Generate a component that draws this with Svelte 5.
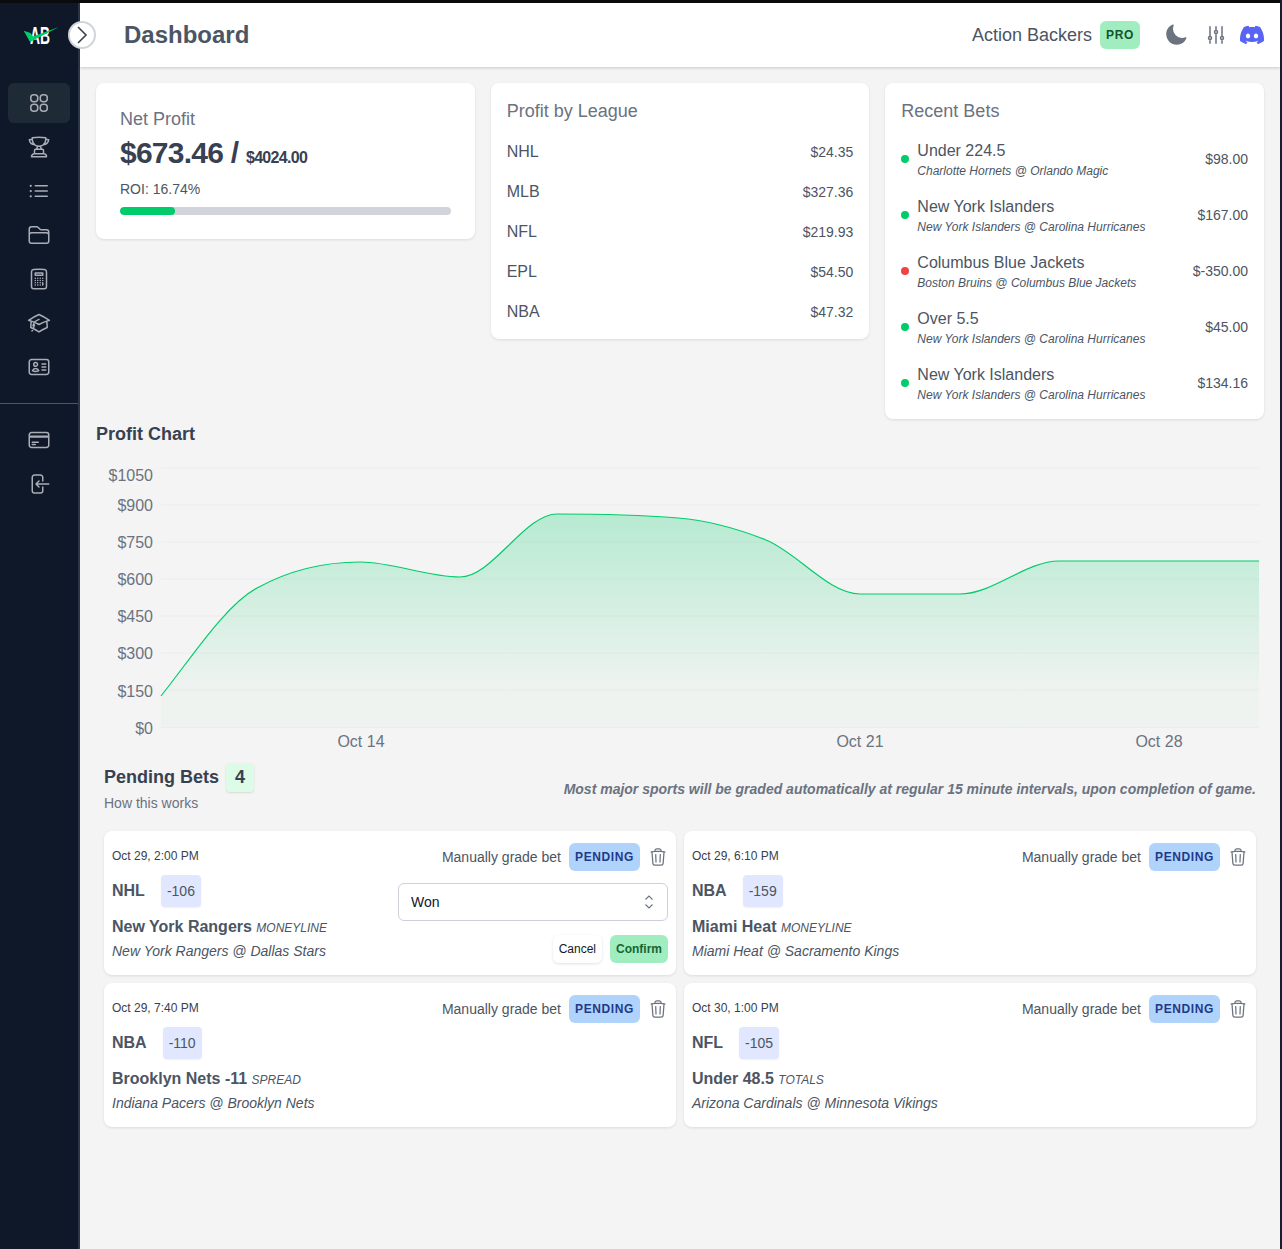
<script>
  const nav = [
    { d: 'M16.5 18.75h-9m9 0a3 3 0 0 1 3 3h-15a3 3 0 0 1 3-3m9 0v-3.375c0-.621-.503-1.125-1.125-1.125h-.871M7.5 18.75v-3.375c0-.621.504-1.125 1.125-1.125h.872m5.007 0H9.497m5.007 0a7.454 7.454 0 0 1-.982-3.172M9.497 14.25a7.454 7.454 0 0 0 .981-3.172M5.25 4.236c-.982.143-1.954.317-2.916.52A6.003 6.003 0 0 0 7.73 9.728M5.25 4.236V4.5c0 2.108.966 3.99 2.48 5.228M5.25 4.236V2.721C7.456 2.41 9.71 2.25 12 2.25c2.291 0 4.545.16 6.75.47v1.516M7.73 9.728a6.726 6.726 0 0 0 2.748 1.35m8.272-6.842V4.5c0 2.108-.966 3.99-2.48 5.228m2.48-5.492a46.32 46.32 0 0 1 2.916.52 6.003 6.003 0 0 1-5.395 4.972m0 0a6.726 6.726 0 0 1-2.749 1.35m0 0a6.772 6.772 0 0 1-3.044 0' },
    { d: 'M8.25 6.75h12M8.25 12h12m-12 5.25h12M3.75 6.75h.007v.008H3.75V6.75Zm.375 0a.375.375 0 1 1-.75 0 .375.375 0 0 1 .75 0ZM3.75 12h.007v.008H3.75V12Zm.375 0a.375.375 0 1 1-.75 0 .375.375 0 0 1 .75 0Zm-.375 5.25h.007v.008H3.75v-.008Zm.375 0a.375.375 0 1 1-.75 0 .375.375 0 0 1 .75 0Z' },
    { d: 'M2.25 12.75V12A2.25 2.25 0 0 1 4.5 9.75h15A2.25 2.25 0 0 1 21.75 12v.75m-8.69-6.44-2.12-2.12a1.5 1.5 0 0 0-1.061-.44H4.5A2.25 2.25 0 0 0 2.25 6v12a2.25 2.25 0 0 0 2.25 2.25h15A2.25 2.25 0 0 0 21.75 18V9a2.25 2.25 0 0 0-2.25-2.25h-5.379a1.5 1.5 0 0 1-1.06-.44Z' },
    { d: 'M15.75 15.75V18m-7.5-6.75h.008v.008H8.25v-.008Zm0 2.25h.008v.008H8.25V13.5Zm0 2.25h.008v.008H8.25v-.008Zm0 2.25h.008v.008H8.25V18Zm2.498-6.75h.007v.008h-.007v-.008Zm0 2.25h.007v.008h-.007V13.5Zm0 2.25h.007v.008h-.007v-.008Zm0 2.25h.007v.008h-.007V18Zm2.504-6.75h.008v.008h-.008v-.008Zm0 2.25h.008v.008h-.008V13.5Zm0 2.25h.008v.008h-.008v-.008Zm0 2.25h.008v.008h-.008V18Zm2.498-6.75h.008v.008h-.008v-.008Zm0 2.25h.008v.008h-.008V13.5ZM8.25 6h7.5v2.25h-7.5V6ZM12 2.25c-1.892 0-3.758.11-5.593.322C5.307 2.7 4.5 3.65 4.5 4.757V19.5a2.25 2.25 0 0 0 2.25 2.25h10.5a2.25 2.25 0 0 0 2.25-2.25V4.757c0-1.108-.806-2.057-1.907-2.185A48.507 48.507 0 0 0 12 2.25Z' },
    { d: 'M4.26 10.147a60.438 60.438 0 0 0-.491 6.347A48.62 48.62 0 0 1 12 20.904a48.62 48.62 0 0 1 8.232-4.41 60.46 60.46 0 0 0-.491-6.347m-15.482 0a50.636 50.636 0 0 0-2.658-.813A59.906 59.906 0 0 1 12 3.493a59.903 59.903 0 0 1 10.399 5.84c-.896.248-1.783.52-2.658.814m-15.482 0A50.717 50.717 0 0 1 12 13.489a50.702 50.702 0 0 1 7.74-3.342M6.75 15a.75.75 0 1 0 0-1.5.75.75 0 0 0 0 1.5Zm0 0v-3.675A55.378 55.378 0 0 1 12 8.443m-7.007 11.55A5.981 5.981 0 0 0 6.75 15.75v-1.5' },
    { d: 'M15 9h3.75M15 12h3.75M15 15h3.75M4.5 19.5h15a2.25 2.25 0 0 0 2.25-2.25V6.75A2.25 2.25 0 0 0 19.5 4.5h-15a2.25 2.25 0 0 0-2.25 2.25v10.5A2.25 2.25 0 0 0 4.5 19.5Zm6-10.125a1.875 1.875 0 1 1-3.75 0 1.875 1.875 0 0 1 3.75 0Zm1.294 6.336a6.721 6.721 0 0 1-3.17.789 6.721 6.721 0 0 1-3.168-.789 3.376 3.376 0 0 1 6.338 0Z' }
  ];
  const navBottom = [
    'M2.25 8.25h19.5M2.25 9h19.5m-16.5 5.25h6m-6 2.25h3m-3.75 3h15a2.25 2.25 0 0 0 2.25-2.25V6.75A2.25 2.25 0 0 0 19.5 4.5h-15a2.25 2.25 0 0 0-2.25 2.25v10.5A2.25 2.25 0 0 0 4.5 19.5Z',
    'M15.75 9V5.25A2.25 2.25 0 0 0 13.5 3h-6a2.25 2.25 0 0 0-2.25 2.25v13.5A2.25 2.25 0 0 0 7.5 21h6a2.25 2.25 0 0 0 2.25-2.25V15M12 9l-3 3 3 3M9 12h12.75'
  ];
  const trash = 'm14.74 9-.346 9m-4.788 0L9.26 9m9.968-3.21c.342.052.682.107 1.022.166m-1.022-.165L18.16 19.673a2.25 2.25 0 0 1-2.244 2.077H8.084a2.25 2.25 0 0 1-2.244-2.077L4.772 5.79m14.456 0a48.108 48.108 0 0 0-3.478-.397m-12 .562c.34-.059.68-.114 1.022-.165m0 0a48.11 48.11 0 0 1 3.478-.397m7.5 0v-.916c0-1.18-.91-2.164-2.09-2.201a51.964 51.964 0 0 0-3.32 0c-1.18.037-2.09 1.022-2.09 2.201v.916m7.5 0a48.667 48.667 0 0 0-7.5 0';

  const leagues = [
    ['NHL', '$24.35'], ['MLB', '$327.36'], ['NFL', '$219.93'], ['EPL', '$54.50'], ['NBA', '$47.32']
  ];
  const recent = [
    { pick: 'Under 224.5', game: 'Charlotte Hornets @ Orlando Magic', amount: '$98.00', won: true },
    { pick: 'New York Islanders', game: 'New York Islanders @ Carolina Hurricanes', amount: '$167.00', won: true },
    { pick: 'Columbus Blue Jackets', game: 'Boston Bruins @ Columbus Blue Jackets', amount: '$-350.00', won: false },
    { pick: 'Over 5.5', game: 'New York Islanders @ Carolina Hurricanes', amount: '$45.00', won: true },
    { pick: 'New York Islanders', game: 'New York Islanders @ Carolina Hurricanes', amount: '$134.16', won: true }
  ];
  const pending = [
    { date: 'Oct 29, 2:00 PM', league: 'NHL', odds: '-106', pick: 'New York Rangers', type: 'MONEYLINE', game: 'New York Rangers @ Dallas Stars', grading: true },
    { date: 'Oct 29, 6:10 PM', league: 'NBA', odds: '-159', pick: 'Miami Heat', type: 'MONEYLINE', game: 'Miami Heat @ Sacramento Kings' },
    { date: 'Oct 29, 7:40 PM', league: 'NBA', odds: '-110', pick: 'Brooklyn Nets -11', type: 'SPREAD', game: 'Indiana Pacers @ Brooklyn Nets' },
    { date: 'Oct 30, 1:00 PM', league: 'NFL', odds: '-105', pick: 'Under 48.5', type: 'TOTALS', game: 'Arizona Cardinals @ Minnesota Vikings' }
  ];

  // chart coordinates are relative to the svg; each point is x, y, slope
  const gridY = [13, 50, 87, 124, 161, 198, 235, 272.5];
  const yLabels = [
    ['$1050', 20], ['$900', 50], ['$750', 87], ['$600', 124], ['$450', 161], ['$300', 198], ['$150', 236], ['$0', 273]
  ];
  const points = [
    [81, 241, -1.26], [177, 133, -0.55], [280, 107, 0], [380, 122, 0], [477, 59, 0], [598, 63, 0.08],
    [686, 85, 0.4], [780, 139, 0], [880, 139, 0], [979, 106, 0], [1079, 106, 0], [1179, 106, 0]
  ];

  function smooth(pts) {
    let d = `M${pts[0][0]} ${pts[0][1]}`;
    for (let i = 1; i < pts.length; i++) {
      const a = pts[i - 1], b = pts[i];
      const h = (b[0] - a[0]) / 3;
      d += `C${a[0] + h} ${a[1] + a[2] * h} ${b[0] - h} ${b[1] - b[2] * h} ${b[0]} ${b[1]}`;
    }
    return d;
  }
  const line = smooth(points);
  const area = `${line}L1179 272.5L81 272.5Z`;
</script>

<div class="shell">
  <aside class="sidebar">
    <div class="logo">
      <svg width="54" height="30" viewBox="0 0 54 30">
        <text x="18" y="24" textLength="20" lengthAdjust="spacingAndGlyphs" class="logo-text">AB</text>
        <path d="M11.7 10.7 L18.5 13 L21 16.5 L47 7 L18 22 Z" fill="#00cc6a" />
      </svg>
    </div>
    <button class="toggle" aria-label="Toggle sidebar">
      <svg width="16" height="18" viewBox="0 0 16 18" fill="none" stroke="#374151" stroke-width="1.6">
        <path d="M4 1l8 8-8 8" />
      </svg>
    </button>
    <nav class="nav">
      <a class="nav-item active" href="#top" aria-label="Dashboard">
        <svg width="24" height="24" viewBox="0 0 24 24" fill="none" stroke="currentColor" stroke-width="1.5">
          <rect x="3.75" y="3.75" width="7" height="7" rx="3" />
          <rect x="13.25" y="3.75" width="7" height="7" rx="3" />
          <rect x="3.75" y="13.25" width="7" height="7" rx="3" />
          <rect x="13.25" y="13.25" width="7" height="7" rx="3" />
        </svg>
      </a>
      {#each nav as item}
        <a class="nav-item" href="#top" aria-label="Menu item">
          <svg width="24" height="24" viewBox="0 0 24 24" fill="none" stroke="currentColor" stroke-width="1.5" stroke-linecap="round" stroke-linejoin="round">
            <path d={item.d} />
          </svg>
        </a>
      {/each}
    </nav>
    <div class="divider"></div>
    <nav class="nav">
      {#each navBottom as d}
        <a class="nav-item" href="#top" aria-label="Menu item">
          <svg width="24" height="24" viewBox="0 0 24 24" fill="none" stroke="currentColor" stroke-width="1.5" stroke-linecap="round" stroke-linejoin="round">
            <path {d} />
          </svg>
        </a>
      {/each}
    </nav>
  </aside>

  <div class="page">
    <header class="topbar">
      <h1>Dashboard</h1>
      <div class="top-right">
        <span class="company">Action Backers</span>
        <span class="pro">PRO</span>
        <svg class="moon" width="24" height="24" viewBox="0 0 24 24" fill="#6b7280">
          <path d="M9.528 1.718a.75.75 0 0 1 .162.819A8.97 8.97 0 0 0 9 6a9 9 0 0 0 9 9 8.97 8.97 0 0 0 3.463-.69.75.75 0 0 1 .981.98 10.503 10.503 0 0 1-9.694 6.46c-5.799 0-10.5-4.701-10.5-10.5 0-4.368 2.667-8.112 6.46-9.694a.75.75 0 0 1 .818.162Z" />
        </svg>
        <svg class="sliders" width="24" height="24" viewBox="0 0 24 24" fill="none" stroke="#6b7280" stroke-width="1.5" stroke-linecap="round" stroke-linejoin="round">
          <path d="M6 13.5V3.75m0 9.75a1.5 1.5 0 0 1 0 3m0-3a1.5 1.5 0 0 0 0 3m0 3.75V16.5m12-3V3.75m0 9.75a1.5 1.5 0 0 1 0 3m0-3a1.5 1.5 0 0 0 0 3m0 3.75V16.5m-6-9V3.75m0 3.75a1.5 1.5 0 0 1 0 3m0-3a1.5 1.5 0 0 0 0 3m0 9.75V10.5" />
        </svg>
        <svg class="discord" width="24" height="24" viewBox="0 0 24 24" fill="#5865f2">
          <path d="M20.317 4.3698a19.7913 19.7913 0 00-4.8851-1.5152.0741.0741 0 00-.0785.0371c-.211.3753-.4447.8648-.6083 1.2495-1.8447-.2762-3.68-.2762-5.4868 0-.1636-.3933-.4058-.8742-.6177-1.2495a.077.077 0 00-.0785-.037 19.7363 19.7363 0 00-4.8852 1.515.0699.0699 0 00-.0321.0277C.5334 9.0458-.319 13.5799.0992 18.0578a.0824.0824 0 00.0312.0561c2.0528 1.5076 4.0413 2.4228 5.9929 3.0294a.0777.0777 0 00.0842-.0276c.4616-.6304.8731-1.2952 1.226-1.9942a.076.076 0 00-.0416-.1057c-.6528-.2476-1.2743-.5495-1.8722-.8923a.077.077 0 01-.0076-.1277c.1258-.0943.2517-.1923.3718-.2914a.0743.0743 0 01.0776-.0105c3.9278 1.7933 8.18 1.7933 12.0614 0a.0739.0739 0 01.0785.0095c.1202.099.246.1981.3728.2924a.077.077 0 01-.0066.1276 12.2986 12.2986 0 01-1.873.8914.0766.0766 0 00-.0407.1067c.3604.698.7719 1.3628 1.225 1.9932a.076.076 0 00.0842.0286c1.961-.6067 3.9495-1.5219 6.0023-3.0294a.077.077 0 00.0313-.0552c.5004-5.177-.8382-9.6739-3.5485-13.6604a.061.061 0 00-.0312-.0286zM8.02 15.3312c-1.1825 0-2.1569-1.0857-2.1569-2.419 0-1.3332.9555-2.4189 2.157-2.4189 1.2108 0 2.1757 1.0952 2.1568 2.419 0 1.3332-.9555 2.4189-2.1569 2.4189zm7.9748 0c-1.1825 0-2.1569-1.0857-2.1569-2.419 0-1.3332.9554-2.4189 2.1569-2.4189 1.2108 0 2.1757 1.0952 2.1568 2.419 0 1.3332-.946 2.4189-2.1568 2.4189Z" />
        </svg>
      </div>
    </header>

    <main class="content">
      <section class="stats">
        <div class="card profit">
          <div class="card-title">Net Profit</div>
          <div class="net"><span>$673.46 /</span> <small>$4024.00</small></div>
          <div class="roi">ROI: 16.74%</div>
          <div class="bar"><div class="bar-fill" style="width: 16.74%"></div></div>
        </div>

        <div class="card leagues">
          <div class="card-title">Profit by League</div>
          {#each leagues as [name, value]}
            <div class="league-row">
              <span class="league-name">{name}</span>
              <span class="league-value">{value}</span>
            </div>
          {/each}
        </div>

        <div class="card recent">
          <div class="card-title">Recent Bets</div>
          {#each recent as bet}
            <div class="recent-row">
              <span class="dot" class:lost={!bet.won}></span>
              <div class="recent-text">
                <div class="recent-pick">{bet.pick}</div>
                <div class="recent-game">{bet.game}</div>
              </div>
              <span class="recent-amount">{bet.amount}</span>
            </div>
          {/each}
        </div>
      </section>

      <h2 class="chart-title">Profit Chart</h2>
      <svg class="chart" width="1184" height="300" viewBox="0 0 1184 300">
        <defs>
          <linearGradient id="fill" x1="0" y1="0" x2="0" y2="1">
            <stop offset="0" stop-color="#00cc6a" stop-opacity="0.25" />
            <stop offset="0.8" stop-color="#00cc6a" stop-opacity="0.03" />
            <stop offset="1" stop-color="#00cc6a" stop-opacity="0.03" />
          </linearGradient>
        </defs>
        {#each gridY as y}
          <line x1="81" x2="1179" y1={y} y2={y} stroke="#e5e7eb" stroke-opacity="0.6" />
        {/each}
        <path d={area} fill="url(#fill)" />
        <path d={line} fill="none" stroke="#00cc6a" stroke-width="1.2" />
        {#each yLabels as [label, y]}
          <text x="73" y={y + 5.5} text-anchor="end" class="axis y-axis">{label}</text>
        {/each}
        <text x="281" y="292" text-anchor="middle" class="axis">Oct 14</text>
        <text x="780" y="292" text-anchor="middle" class="axis">Oct 21</text>
        <text x="1079" y="292" text-anchor="middle" class="axis">Oct 28</text>
      </svg>

      <section class="pending">
        <div class="pending-head">
          <div>
            <div class="pending-title">
              <h2>Pending Bets</h2>
              <span class="count">4</span>
            </div>
            <div class="how">How this works</div>
          </div>
          <p class="note">Most major sports will be graded automatically at regular 15 minute intervals, upon completion of game.</p>
        </div>

        <div class="bets">
          {#each pending as bet}
            <article class="bet">
              <div class="bet-left">
                <div class="bet-date">{bet.date}</div>
                <div class="bet-league">
                  <strong>{bet.league}</strong>
                  <span class="odds">{bet.odds}</span>
                </div>
                <div class="bet-pick"><strong>{bet.pick}</strong> <em>{bet.type}</em></div>
                <div class="bet-game">{bet.game}</div>
              </div>
              <div class="bet-right">
                <div class="bet-actions">
                  <span class="grade">Manually grade bet</span>
                  <span class="status">PENDING</span>
                  <svg class="trash" width="20" height="20" viewBox="0 0 24 24" fill="none" stroke="#6b7280" stroke-width="1.5" stroke-linecap="round" stroke-linejoin="round">
                    <path d={trash} />
                  </svg>
                </div>
                {#if bet.grading}
                  <div class="select-wrap">
                    <select class="select">
                      <option>Won</option>
                      <option>Lost</option>
                      <option>Push</option>
                    </select>
                    <svg class="select-icon" width="12" height="18" viewBox="0 0 12 18" fill="none" stroke="#6b7280" stroke-width="1.1">
                      <path d="M2.5 6.5L6 3l3.5 3.5M2.5 11.5L6 15l3.5-3.5" />
                    </svg>
                  </div>
                  <div class="grade-buttons">
                    <button class="cancel">Cancel</button>
                    <button class="confirm">Confirm</button>
                  </div>
                {/if}
              </div>
            </article>
          {/each}
        </div>
      </section>
    </main>
  </div>
</div>

<style>
  :global(body) {
    background: #161e30;
    font-family: "Liberation Sans", Arial, sans-serif;
  }

  h1, h2, p {
    margin: 0;
  }

  .shell {
    display: flex;
    min-height: 1246px;
    border-top: 3px solid #0b0b0d;
    margin-right: 2px;
  }

  .sidebar {
    position: relative;
    flex: 0 0 78px;
    background: #0f1829;
    border-right: 2px solid #2b3648;
    color: #a9adb5;
  }

  .logo {
    height: 64px;
    display: flex;
    align-items: center;
    justify-content: center;
  }

  .logo-text {
    font: bold 23px "Liberation Sans", Arial, sans-serif;
    fill: #fff;
  }

  .toggle {
    position: absolute;
    top: 18px;
    left: 68px;
    width: 28px;
    height: 28px;
    padding: 0;
    border-radius: 50%;
    border: 2px solid #d1d5db;
    background: #fff;
    display: flex;
    align-items: center;
    justify-content: center;
    z-index: 2;
  }

  .nav {
    display: flex;
    flex-direction: column;
    gap: 4px;
    padding: 16px 8px 0;
  }

  .nav-item {
    height: 40px;
    border-radius: 6px;
    display: flex;
    align-items: center;
    justify-content: center;
    color: inherit;
  }

  .nav-item.active {
    background: #1f2a37;
  }

  .divider {
    height: 1px;
    background: #4b5563;
    margin-top: 16px;
  }

  .page {
    flex: 1;
    min-width: 0;
    background: #f4f4f4;
  }

  .topbar {
    height: 64px;
    background: #fff;
    box-shadow: 0 1px 3px rgba(0, 0, 0, 0.18);
    display: flex;
    align-items: center;
    justify-content: space-between;
    padding: 0 16px 0 44px;
    position: relative;
  }

  h1 {
    font-size: 24px;
    font-weight: 700;
    color: #4b5563;
  }

  .top-right {
    display: flex;
    align-items: center;
  }

  .company {
    font-size: 18px;
    color: #4b5563;
  }

  .pro {
    margin-left: 8px;
    width: 40px;
    height: 28px;
    border-radius: 6px;
    background: #a0eebf;
    color: #14532d;
    font-size: 12px;
    font-weight: 700;
    letter-spacing: 0.6px;
    display: flex;
    align-items: center;
    justify-content: center;
  }

  .moon {
    margin-left: 24px;
  }

  .sliders {
    margin-left: 16px;
  }

  .discord {
    margin-left: 12px;
  }

  .content {
    padding: 16px 16px 0;
  }

  .stats {
    display: grid;
    grid-template-columns: repeat(3, 1fr);
    gap: 16px;
    align-items: start;
  }

  .card {
    background: #fff;
    border-radius: 8px;
    box-shadow: 0 1px 3px rgba(0, 0, 0, 0.1);
  }

  .card-title {
    font-size: 18px;
    line-height: 24px;
    color: #6b7280;
  }

  .profit {
    height: 156px;
    box-sizing: border-box;
    padding: 24px;
  }

  .net {
    margin-top: 4px;
    color: #374151;
    font-weight: 700;
    font-size: 30px;
    line-height: 36px;
    letter-spacing: -0.75px;
  }

  .net small {
    font-size: 16px;
    letter-spacing: -0.7px;
  }

  .roi {
    margin-top: 3px;
    font-size: 14px;
    line-height: 20px;
    color: #4b5563;
  }

  .bar {
    margin-top: 8px;
    height: 8px;
    border-radius: 4px;
    background: #d1d5db;
    overflow: hidden;
  }

  .bar-fill {
    height: 100%;
    border-radius: 4px;
    background: #00cc6a;
  }

  .leagues {
    padding: 16px;
    height: 256px;
    box-sizing: border-box;
  }

  .league-row {
    height: 40px;
    display: flex;
    align-items: center;
    justify-content: space-between;
  }

  .leagues .card-title {
    margin-bottom: 8px;
  }

  .league-name {
    font-size: 16px;
    line-height: 20px;
    padding-top: 1px;
    color: #4b5563;
  }

  .league-value {
    font-size: 14px;
    line-height: 20px;
    padding-top: 1px;
    color: #4b5563;
  }

  .recent {
    padding: 16px;
    height: 336px;
    box-sizing: border-box;
  }

  .recent .card-title {
    margin-bottom: 8px;
  }

  .recent-row {
    height: 56px;
    display: flex;
    align-items: center;
  }

  .dot {
    width: 8px;
    height: 8px;
    border-radius: 50%;
    background: #00cc6a;
    margin-right: 8px;
    flex: none;
  }

  .dot.lost {
    background: #ef4444;
  }

  .recent-text {
    flex: 1;
    min-width: 0;
  }

  .recent-pick {
    font-size: 16px;
    line-height: 24px;
    color: #4b5563;
  }

  .recent-game {
    font-size: 12px;
    line-height: 16px;
    font-style: italic;
    color: #4b5563;
  }

  .recent-amount {
    font-size: 14px;
    color: #4b5563;
  }

  .chart-title {
    margin-top: 3px;
    font-size: 18px;
    line-height: 24px;
    font-weight: 700;
    color: #374151;
  }

  .chart {
    display: block;
    margin: 9px 0 0 -16px;
  }

  .axis {
    font-size: 16px;
    fill: #6b7280;
    font-family: "Liberation Sans", Arial, sans-serif;
  }

  .pending {
    padding: 8px 8px 0;
  }

  .pending-head {
    display: flex;
    justify-content: space-between;
    align-items: center;
  }

  .pending-title {
    display: flex;
    align-items: center;
    gap: 7px;
  }

  .pending-title h2 {
    font-size: 18px;
    font-weight: 700;
    color: #374151;
  }

  .count {
    width: 28px;
    height: 29px;
    border-radius: 4px;
    background: #dcfce7;
    box-shadow: 0 1px 2px rgba(0, 0, 0, 0.12);
    color: #374151;
    font-size: 18px;
    font-weight: 700;
    display: flex;
    align-items: center;
    justify-content: center;
  }

  .how {
    margin-top: 1px;
    font-size: 14px;
    line-height: 20px;
    color: #6b7280;
  }

  .note {
    padding-top: 2px;
    font-size: 14px;
    font-weight: 700;
    font-style: italic;
    color: #6b7280;
  }

  .bets {
    margin-top: 18px;
    display: grid;
    grid-template-columns: 1fr 1fr;
    gap: 8px;
  }

  .bet {
    height: 144px;
    box-sizing: border-box;
    padding: 12px 8px;
    background: #fff;
    border-radius: 8px;
    box-shadow: 0 1px 3px rgba(0, 0, 0, 0.1);
    display: flex;
    justify-content: space-between;
  }

  .bet-date {
    height: 26px;
    margin-bottom: 6px;
    display: flex;
    align-items: center;
    font-size: 12px;
    color: #374151;
  }

  .bet-league {
    display: flex;
    align-items: center;
    gap: 16px;
    color: #4b5563;
    font-size: 16px;
  }

  .odds {
    height: 32px;
    padding: 0 6px;
    border-radius: 4px;
    background: #e0e7ff;
    box-shadow: 0 1px 2px rgba(0, 0, 0, 0.06);
    font-size: 14px;
    display: flex;
    align-items: center;
  }

  .bet-pick {
    margin-top: 9px;
    font-size: 16px;
    line-height: 22px;
    color: #4b5563;
  }

  .bet-pick em {
    font-size: 12px;
  }

  .bet-game {
    margin-top: 2px;
    font-size: 14px;
    line-height: 20px;
    font-style: italic;
    color: #4b5563;
  }

  .bet-right {
    width: 270px;
  }

  .bet-actions {
    display: flex;
    align-items: center;
    justify-content: flex-end;
  }

  .grade {
    font-size: 14px;
    color: #4b5563;
  }

  .status {
    margin-left: 8px;
    height: 28px;
    width: 71px;
    border-radius: 6px;
    background: #b0d3fc;
    color: #1e3a8a;
    font-size: 12px;
    font-weight: 700;
    letter-spacing: 0.6px;
    display: flex;
    align-items: center;
    justify-content: center;
  }

  .trash {
    margin: 0 0 0 8px;
  }

  .select-wrap {
    position: relative;
    margin-top: 12px;
  }

  .select {
    appearance: none;
    width: 100%;
    height: 38px;
    padding: 0 12px;
    background: #fff;
    border: 1px solid #cdd0da;
    border-radius: 6px;
    font: 14px "Liberation Sans", Arial, sans-serif;
    color: #111827;
  }

  .select-icon {
    position: absolute;
    right: 13px;
    top: 10px;
  }

  .grade-buttons {
    margin-top: 14px;
    display: flex;
    justify-content: flex-end;
    gap: 8px;
  }

  .grade-buttons button {
    height: 28px;
    padding: 0 6px;
    border: none;
    border-radius: 6px;
    font: 12px "Liberation Sans", Arial, sans-serif;
  }

  .cancel {
    background: #fff;
    color: #111827;
    box-shadow: 0 1px 3px rgba(0, 0, 0, 0.12);
  }

  .grade-buttons .confirm {
    background: #a0eebf;
    color: #166534;
    font-weight: 700;
  }
</style>
